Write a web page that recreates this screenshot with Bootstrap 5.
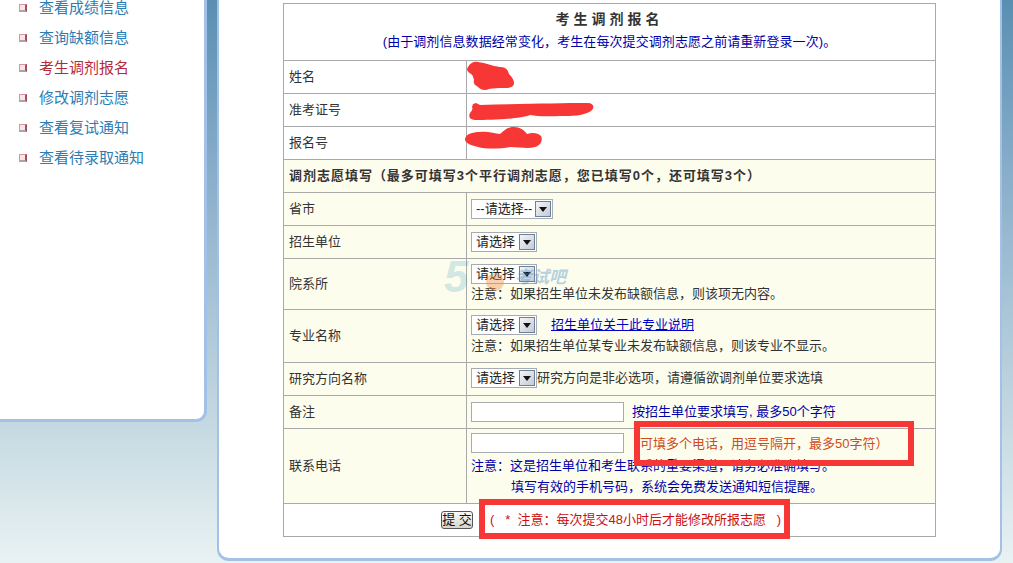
<!DOCTYPE html>
<html lang="zh-CN">
<head>
<meta charset="utf-8">
<title>考生调剂报名</title>
<link rel="stylesheet" href="https://cdn.jsdelivr.net/npm/bootstrap@5.3.0/dist/css/bootstrap.min.css">
<style>
html,body{height:563px;overflow:hidden}
body{background:linear-gradient(180deg,#5a8fb2 0,#8aafcb 180px,#c4d8e1 420px,#e9f2f3 563px);font-family:"Liberation Sans","Noto Sans CJK SC",sans-serif;font-size:13px;color:#333;position:relative}
.stage{height:561px;padding-right:11px;gap:10px}
.side-panel{width:207px;height:422px;background:#fff;border:solid #a3c0e6;border-width:0 3px 3px 0;border-radius:0 0 11px 0}
.side-list{margin-top:-7px;padding:0 0 0 19px}
.side-list li{height:30px;line-height:30px;font-size:15px;color:#2b7db3;display:flex;align-items:center;gap:12px}
.side-list li.now{color:#b52a3a}
.bul{width:8px;height:8px;flex:none;background:#fbe3e6;border-style:solid;border-width:1px 2px 2px 1px;border-color:#d49aa3 #a0505c #a9a3b0 #d49aa3}
.main-panel{flex:1;background:#fff;border:solid #a3c0e6;border-width:0 2px 3px 2px;border-radius:0 0 12px 12px;padding:3px 0 0 64px}
.form-tb{width:653px;height:534px;table-layout:fixed;border-collapse:collapse;margin:0}
.form-tb td{border:1px solid #a9a9a9;padding:0 5px;vertical-align:middle;line-height:16px;background:#fff;color:#333;white-space:nowrap}
.form-tb td:nth-child(2){padding-left:4px}
.form-tb tr.tint td{background:#fdfdee}
.col-a{width:183px}
.ttl{font-size:14px;font-weight:700;letter-spacing:4px;color:#333;text-align:center;line-height:18px;margin-top:-4px}
.sub{color:#0000aa;text-align:center;margin-top:6px;line-height:16px;letter-spacing:.08px}
.tip-b{font-weight:700;letter-spacing:.98px;color:#222}
.pick{display:inline-flex;height:20px;border:1px solid #a5acb2;background:#fff;vertical-align:top;align-items:stretch;padding:1px;flex:none}
.pick select{appearance:none;border:0;background:transparent;font:13px/16px "Liberation Sans","Noto Sans CJK SC",sans-serif;color:#222;padding:0 3px;width:46px;outline:0}
.pick.wide select{width:62px}
.arrow-b{width:16px;background:linear-gradient(135deg,#f3f5f8,#c3cad6);border:1px solid #6d7f99;display:flex;align-items:center;justify-content:center}
.line-top{height:20px;display:flex;align-items:flex-start}
.up-a{margin-top:-2px}
.up-b{margin-top:-3px}
.up-c{margin-bottom:2px}
.nt{display:block;margin-top:2px;line-height:16px}
.nt-b{margin-top:3px}
.nt-c{margin-top:5px}
.nt-d{margin-top:5px;padding-left:40px}
.blue{color:#0000aa}
.box-in{width:153px;height:20px;border:1px solid #a5acb2;background:#fff;display:block;padding:0;flex:none}
.box-up{margin-top:-4px}
.lnk{color:#0000cc;text-decoration:underline;margin-left:14px;line-height:20px}
.sub-btn{font:13px/14px "Liberation Sans","Noto Sans CJK SC",sans-serif;color:#111;width:32px;height:18px;padding:0;white-space:nowrap;background:linear-gradient(#fafafa,#d5d5d0);border:1px solid #555;border-radius:3px}
.redt{color:#cc1111;margin-left:17px;white-space:pre}
.orgt{color:#cf4a1c;position:absolute;left:640px;top:436px;line-height:16px;white-space:nowrap}
.ann{position:absolute;border:6.5px solid #f73636;pointer-events:none}
.ann1{left:634px;top:421px;width:280px;height:45px}
.ann2{left:479px;top:499px;width:311px;height:40px}
.scr{position:absolute;left:0;top:0;width:1013px;height:563px;pointer-events:none}
</style>
</head>
<body>
<div class="stage d-flex align-items-start">
  <div class="side-panel flex-none">
    <ul class="side-list list-unstyled">
      <li><i class="bul"></i>查看成绩信息</li>
      <li><i class="bul"></i>查询缺额信息</li>
      <li class="now"><i class="bul"></i>考生调剂报名</li>
      <li><i class="bul"></i>修改调剂志愿</li>
      <li><i class="bul"></i>查看复试通知</li>
      <li><i class="bul"></i>查看待录取通知</li>
    </ul>
  </div>
  <div class="main-panel align-self-stretch">
    <table class="form-tb">
      <colgroup><col class="col-a"><col></colgroup>
      <tr style="height:57px"><td colspan="2"><div class="ttl">考生调剂报名</div><div class="sub">(由于调剂信息数据经常变化，考生在每次提交调剂志愿之前请重新登录一次)。</div></td></tr>
      <tr style="height:33px"><td>姓名</td><td></td></tr>
      <tr style="height:33px"><td>准考证号</td><td></td></tr>
      <tr style="height:33px"><td>报名号</td><td></td></tr>
      <tr class="tint" style="height:33px"><td colspan="2" class="tip-b">调剂志愿填写（最多可填写3个平行调剂志愿，您已填写0个，还可填写3个）</td></tr>
      <tr class="tint" style="height:33px"><td>省市</td><td><span class="pick wide"><select aria-label="省市"><option>--请选择--</option></select><span class="arrow-b"><svg width="8" height="5" viewBox="0 0 8 5"><path d="M0 0h8L4 5z" fill="#111"/></svg></span></span></td></tr>
      <tr class="tint" style="height:33px"><td>招生单位</td><td><span class="pick"><select aria-label="招生单位"><option>请选择</option></select><span class="arrow-b"><svg width="8" height="5" viewBox="0 0 8 5"><path d="M0 0h8L4 5z" fill="#111"/></svg></span></span></td></tr>
      <tr class="tint" style="height:51px"><td>院系所</td><td><div class="line-top up-a"><span class="pick"><select aria-label="院系所"><option>请选择</option></select><span class="arrow-b"><svg width="8" height="5" viewBox="0 0 8 5"><path d="M0 0h8L4 5z" fill="#111"/></svg></span></span></div><span class="nt">注意：如果招生单位未发布缺额信息，则该项无内容。</span></td></tr>
      <tr class="tint" style="height:53px"><td>专业名称</td><td><div class="line-top up-b"><span class="pick"><select aria-label="专业名称"><option>请选择</option></select><span class="arrow-b"><svg width="8" height="5" viewBox="0 0 8 5"><path d="M0 0h8L4 5z" fill="#111"/></svg></span></span><a class="lnk" href="#">招生单位关于此专业说明</a></div><span class="nt nt-b">注意：如果招生单位某专业未发布缺额信息，则该专业不显示。</span></td></tr>
      <tr class="tint" style="height:33px"><td>研究方向名称</td><td><div class="line-top align-items-center up-c"><span class="pick"><select aria-label="研究方向"><option>请选择</option></select><span class="arrow-b"><svg width="8" height="5" viewBox="0 0 8 5"><path d="M0 0h8L4 5z" fill="#111"/></svg></span></span><span>研究方向是非必选项，请遵循欲调剂单位要求选填</span></div></td></tr>
      <tr class="tint" style="height:33px"><td>备注</td><td><div class="d-flex align-items-center"><input class="box-in" aria-label="备注"><span class="blue ms-2">按招生单位要求填写, 最多50个字符</span></div></td></tr>
      <tr class="tint" style="height:75px"><td>联系电话</td><td><input class="box-in box-up" aria-label="联系电话"><span class="nt nt-c blue">注意：这是招生单位和考生联系的重要渠道，请务必准确填写。</span><span class="nt nt-d blue">填写有效的手机号码，系统会免费发送通知短信提醒。</span></td></tr>
      <tr style="height:33px"><td colspan="2"><div class="d-flex align-items-center" style="padding-left:152px"><button class="sub-btn" type="button">提 交</button><span class="redt">(   *  注意：每次提交48小时后才能修改所报志愿   )</span></div></td></tr>
    </table>
  </div>
</div>
<span class="orgt">可填多个电话，用逗号隔开，最多50字符）</span>
<svg class="scr" viewBox="0 0 1013 563" aria-hidden="true">
  <text x="444" y="292" font-family="Liberation Sans" font-size="44" font-weight="700" font-style="italic" fill="#3f9fc0" opacity=".22">5</text>
  <circle cx="495" cy="282" r="9" fill="#f08a3c" opacity=".4"/>
  <text x="515" y="283" font-family="Noto Sans CJK SC" font-size="17" font-weight="700" font-style="italic" fill="#4f93c8" opacity=".4">考试吧</text>
  <path d="M468 67c2-4 6-6 10-5 8 1 14 4 22 5 6 0 8 3 9 7 3 3 5 6 5 9 0 4-4 5-9 5-7 0-12 0-16 1-4 2-8 1-11-2-3-2-5-3-4-7-1-3-1-5-3-6-4-3-5-4-3-7z" fill="#f73636"/>
  <path d="M473 104L476 103L480 105C520 104 560 103 588 103C593 103 595 107 592 110C587 115 575 116 565 116C550 116 540 117 530 115C520 119 490 120 475 120C470 120 468 117 470 113C472 111 473 109 472 107z" fill="#f73636"/>
  <path d="M465 139C466 134 472 132 480 132C488 131 495 134 500 134C503 132 506 127 514 127C520 127 524 130 527 134C533 132 538 133 541 136C543 140 541 145 535 147C528 149 520 147 510 147C500 149 485 149 478 147C470 145 465 143 465 139z" fill="#f73636"/>
</svg>
<div class="ann ann1"></div>
<div class="ann ann2"></div>
<script src="https://cdn.jsdelivr.net/npm/bootstrap@5.3.0/dist/js/bootstrap.bundle.min.js"></script>
</body>
</html>
